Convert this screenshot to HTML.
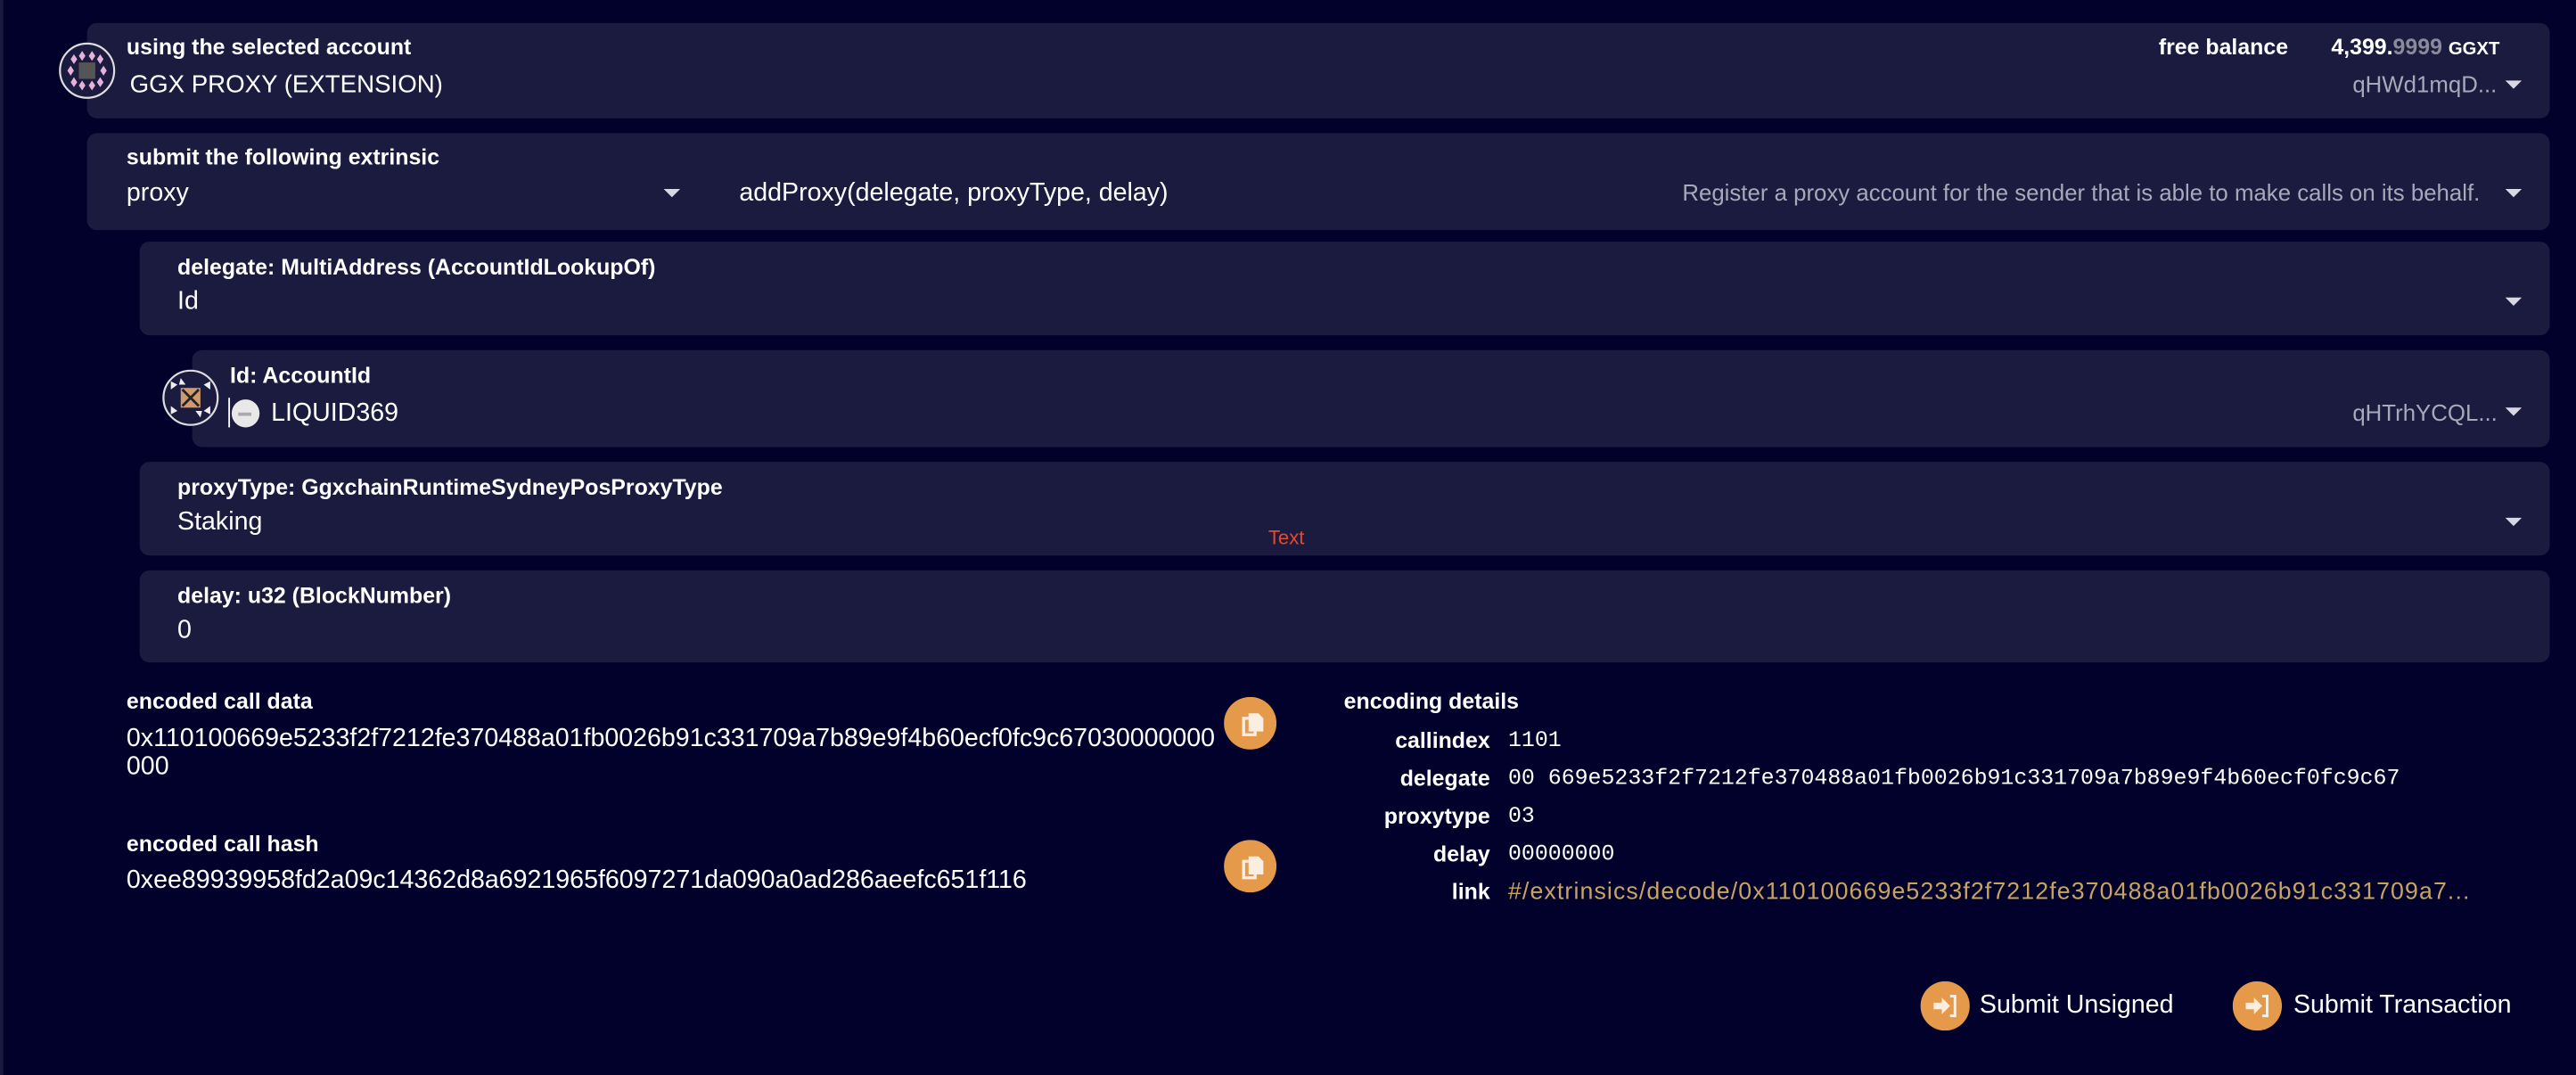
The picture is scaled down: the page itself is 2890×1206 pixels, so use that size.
<!DOCTYPE html>
<html><head><meta charset="utf-8"><style>
html,body{margin:0;padding:0;width:2890px;height:1206px;overflow:hidden;background:#01012c;}
#s{position:absolute;left:0;top:0;width:1568px;height:654px;transform:scale(1.8431,1.844);transform-origin:0 0;font-family:"Liberation Sans",sans-serif;color:#fff;}
.p{position:absolute;background:#1b1b40;border-radius:6px;right:16px;}
.a{position:absolute;}
.lb{font-weight:bold;font-size:13.5px;}
.v{font-size:15.5px;}
.g{color:#a8a8ba;}
.car{position:absolute;width:0;height:0;border-left:5px solid transparent;border-right:5px solid transparent;border-top:5px solid #d8d8e4;}
.mono{font-family:"Liberation Mono",monospace;font-size:13.5px;}
</style></head><body><div id="s">
<div class="a" style="left:0;top:0;width:2px;height:654px;background:#1a1a40"></div>

<div class="p" style="left:53px;top:14px;height:58px"></div>
<svg class="a" style="left:35px;top:25px" width="36" height="36" viewBox="0 0 36 36"><circle cx="18" cy="18" r="16.5" fill="#1b1b40" stroke="#ddd" stroke-width="1.2"/><g fill="#e6b3d8"><path d="M10 8l2 3-2 3-2-3z M15 6l2 3-2 3-2-3z M21 6l2 3-2 3-2-3z M26 8l2 3-2 3-2-3z M8 15l2 3-2 3-2-3z M28 15l2 3-2 3-2-3z M10 22l2 3-2 3-2-3z M15 24l2 3-2 3-2-3z M21 24l2 3-2 3-2-3z M26 22l2 3-2 3-2-3z"/></g><rect x="13" y="13" width="10" height="10" fill="#555"/></svg>
<div class="a lb" style="left:77px;top:21px">using the selected account</div>
<div class="a" style="left:79px;top:43px;font-size:15px">GGX PROXY (EXTENSION)</div>
<div class="a lb" style="left:1314px;top:21px">free balance</div>
<div class="a lb" style="left:1419px;top:21px">4,399.<span style="color:#8a8a9a">9999</span> <span style="font-size:11px">GGXT</span></div>
<div class="a g" style="left:1432px;top:43px;font-size:14px">qHWd1mqD...</div>
<div class="car" style="left:1525px;top:49px"></div>

<div class="p" style="left:53px;top:81px;height:59px"></div>
<div class="a lb" style="left:77px;top:88px">submit the following extrinsic</div>
<div class="a v" style="left:77px;top:109px">proxy</div>
<div class="car" style="left:404px;top:115px"></div>
<div class="a v" style="left:450px;top:109px">addProxy(delegate, proxyType, delay)</div>
<div class="a g" style="left:1024px;top:109px;font-size:14px">Register a proxy account for the sender that is able to make calls on its behalf.</div>
<div class="car" style="left:1525px;top:115px"></div>

<div class="p" style="left:85px;top:147px;height:57px"></div>
<div class="a lb" style="left:108px;top:155px">delegate: MultiAddress (AccountIdLookupOf)</div>
<div class="a v" style="left:108px;top:175px">Id</div>
<div class="car" style="left:1525px;top:181px"></div>

<div class="p" style="left:117px;top:213px;height:59px"></div>
<svg class="a" style="left:98px;top:224px" width="36" height="36" viewBox="0 0 36 36"><circle cx="18" cy="18" r="16.5" fill="#1b1b40" stroke="#ddd" stroke-width="1.2"/><path d="M6 8l4 2-4 3z M30 8l-4 2 4 3z M6 28l4-2-4-3z M30 28l-4-2 4-3z M12 6l3 4h-4z M24 30l-3-4h4z" fill="#eee"/><rect x="12" y="12" width="12" height="12" fill="#d09a70"/><path d="M13 13l5 5 5-5-5 5 5 5-5-5-5 5 5-5z" stroke="#222" stroke-width="1.5"/></svg>
<div class="a lb" style="left:140px;top:221px">Id: AccountId</div>
<div class="a" style="left:139px;top:242px;width:1px;height:18px;background:#fff"></div>
<div class="a" style="left:141px;top:243px;width:17px;height:17px;border-radius:50%;background:#e8e8e8"></div>
<div class="a" style="left:145px;top:251px;width:8px;height:2px;background:#aaa"></div>
<div class="a v" style="left:165px;top:243px">LIQUID369</div>
<div class="a g" style="left:1432px;top:243px;font-size:14px">qHTrhYCQL...</div>
<div class="car" style="left:1525px;top:248px"></div>

<div class="p" style="left:85px;top:281px;height:57px"></div>
<div class="a lb" style="left:108px;top:289px">proxyType: GgxchainRuntimeSydneyPosProxyType</div>
<div class="a v" style="left:108px;top:309px">Staking</div>
<div class="a" style="left:772px;top:320px;font-size:12px;color:#e8472b">Text</div>
<div class="car" style="left:1525px;top:315px"></div>

<div class="p" style="left:85px;top:347px;height:56px"></div>
<div class="a lb" style="left:108px;top:355px">delay: u32 (BlockNumber)</div>
<div class="a v" style="left:108px;top:375px">0</div>

<div class="a lb" style="left:77px;top:419px">encoded call data</div>
<div class="a v" style="left:77px;top:441px;width:666px;word-break:break-all;line-height:17px">0x110100669e5233f2f7212fe370488a01fb0026b91c331709a7b89e9f4b60ecf0fc9c67030000000000</div>
<div class="a lb" style="left:77px;top:506px">encoded call hash</div>
<div class="a v" style="left:77px;top:527px">0xee89939958fd2a09c14362d8a6921965f6097271da090a0ad286aeefc651f116</div>
<svg class="a" style="left:745px;top:424px" width="32" height="32"><circle cx="16" cy="16" r="16" fill="#e59a4b"/><path d="M15 13h-3v10h7v-2" fill="none" stroke="#fbeee0" stroke-width="1.8"/><path d="M15 10h6l3 3v8h-9z" fill="#fbeee0"/></svg>
<svg class="a" style="left:745px;top:511px" width="32" height="32"><circle cx="16" cy="16" r="16" fill="#e59a4b"/><path d="M15 13h-3v10h7v-2" fill="none" stroke="#fbeee0" stroke-width="1.8"/><path d="M15 10h6l3 3v8h-9z" fill="#fbeee0"/></svg>

<div class="a lb" style="left:818px;top:419px">encoding details</div>
<div class="a lb" style="left:800px;width:107px;text-align:right;top:443px">callindex</div>
<div class="a mono" style="left:918px;top:444px">1101</div>
<div class="a lb" style="left:800px;width:107px;text-align:right;top:466px">delegate</div>
<div class="a mono" style="left:918px;top:467px">00 669e5233f2f7212fe370488a01fb0026b91c331709a7b89e9f4b60ecf0fc9c67</div>
<div class="a lb" style="left:800px;width:107px;text-align:right;top:489px">proxytype</div>
<div class="a mono" style="left:918px;top:490px">03</div>
<div class="a lb" style="left:800px;width:107px;text-align:right;top:512px">delay</div>
<div class="a mono" style="left:918px;top:513px">00000000</div>
<div class="a lb" style="left:800px;width:107px;text-align:right;top:535px">link</div>
<div class="a" style="left:918px;top:535px;font-size:14.5px;letter-spacing:0.6px;color:#c9a45e">#/extrinsics/decode/0x110100669e5233f2f7212fe370488a01fb0026b91c331709a7...</div>

<svg class="a" style="left:1169px;top:597px" width="30" height="30"><circle cx="15" cy="15" r="15" fill="#e59a4b"/><path d="M8 13h5v-3l5 5-5 5v-3H8z" fill="#fbeee0"/><path d="M18 9h3v12h-3" fill="none" stroke="#fbeee0" stroke-width="1.6"/></svg>
<div class="a" style="left:1205px;top:603px;font-size:15.5px">Submit Unsigned</div>
<svg class="a" style="left:1359px;top:597px" width="30" height="30"><circle cx="15" cy="15" r="15" fill="#e59a4b"/><path d="M8 13h5v-3l5 5-5 5v-3H8z" fill="#fbeee0"/><path d="M18 9h3v12h-3" fill="none" stroke="#fbeee0" stroke-width="1.6"/></svg>
<div class="a" style="left:1396px;top:603px;font-size:15.5px">Submit Transaction</div>
</div></body></html>
